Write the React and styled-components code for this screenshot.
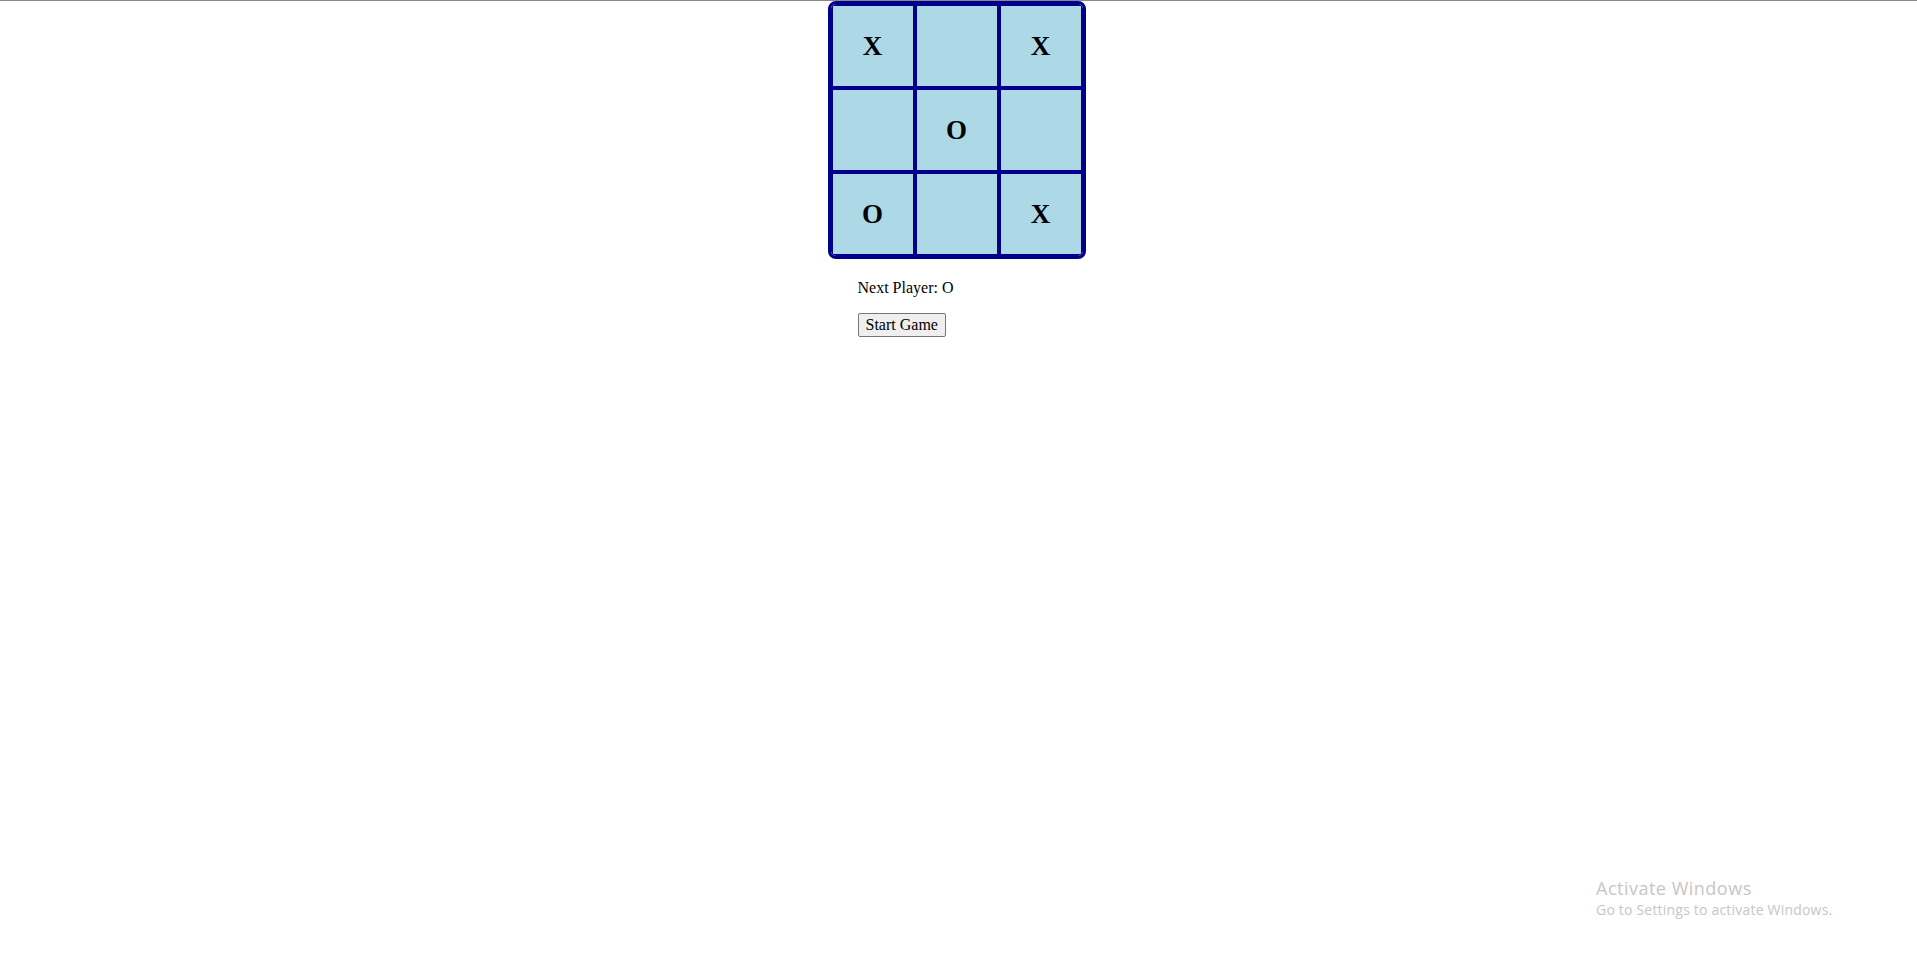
import React, { useState } from "react";
import styled, { createGlobalStyle } from "styled-components";

const GlobalStyle = createGlobalStyle`
  html, body {
    margin: 0;
    padding: 0;
    background: #ffffff;
  }
  body {
    font-family: "Liberation Serif", "Times New Roman", serif;
    font-size: 16px;
    color: #000;
  }
`;

const Page = styled.div`
  min-height: 967px;
  border-top: 1px solid #8a8a8a;
  padding-right: 4px;
  position: relative;
`;

const Game = styled.div`
  width: fit-content;
  margin: 0 auto;
  display: flex;
  flex-direction: column;
`;

const Board = styled.div`
  display: grid;
  grid-template-columns: repeat(3, 84px);
  grid-template-rows: repeat(3, 84px);
  border: 3px solid #00008b;
  border-radius: 8px;
  overflow: hidden;
  background: #add8e6;
`;

const Cell = styled.div`
  border: 2px solid #00008b;
  background: #add8e6;
  display: flex;
  align-items: center;
  justify-content: center;
  font-size: 27px;
  font-weight: bold;
  cursor: pointer;
  padding-top: 1px;
`;

const Info = styled.div`
  padding-left: 30px;
  margin-top: 20px;
`;

const Status = styled.p`
  margin: 0 0 16px;
  line-height: 18px;
`;

const StartButton = styled.button`
  font-family: inherit;
  font-size: 16px;
  padding: 2px 7px;
  background: #efefef;
  border: 1px solid #767676;
  border-radius: 2px;
  color: #000;
  cursor: pointer;
`;

const Watermark = styled.div`
  position: absolute;
  left: 1596px;
  top: 876px;
  font-family: "Open Sans", "Noto Sans", sans-serif;
  color: #c6c6c6;
  pointer-events: none;
`;

const WatermarkTitle = styled.div`
  font-size: 18px;
  letter-spacing: 0.5px;
  line-height: 22px;
`;

const WatermarkSub = styled.div`
  font-size: 14px;
  letter-spacing: 0.2px;
  line-height: 18px;
  margin-top: 2px;
`;

const initial = ["X", "", "X", "", "O", "", "O", "", "X"];

export default function App() {
  const [squares, setSquares] = useState(initial);
  const [next, setNext] = useState("O");

  const play = (i) => {
    if (squares[i]) return;
    const copy = squares.slice();
    copy[i] = next;
    setSquares(copy);
    setNext(next === "X" ? "O" : "X");
  };

  const restart = () => {
    setSquares(Array(9).fill(""));
    setNext("X");
  };

  return (
    <Page>
      <GlobalStyle />
      <Game>
        <Board>
          {squares.map((v, i) => (
            <Cell key={i} onClick={() => play(i)}>
              {v}
            </Cell>
          ))}
        </Board>
        <Info>
          <Status>Next Player: {next}</Status>
          <StartButton onClick={restart}>Start Game</StartButton>
        </Info>
      </Game>
      <Watermark>
        <WatermarkTitle>Activate Windows</WatermarkTitle>
        <WatermarkSub>Go to Settings to activate Windows.</WatermarkSub>
      </Watermark>
    </Page>
  );
}
